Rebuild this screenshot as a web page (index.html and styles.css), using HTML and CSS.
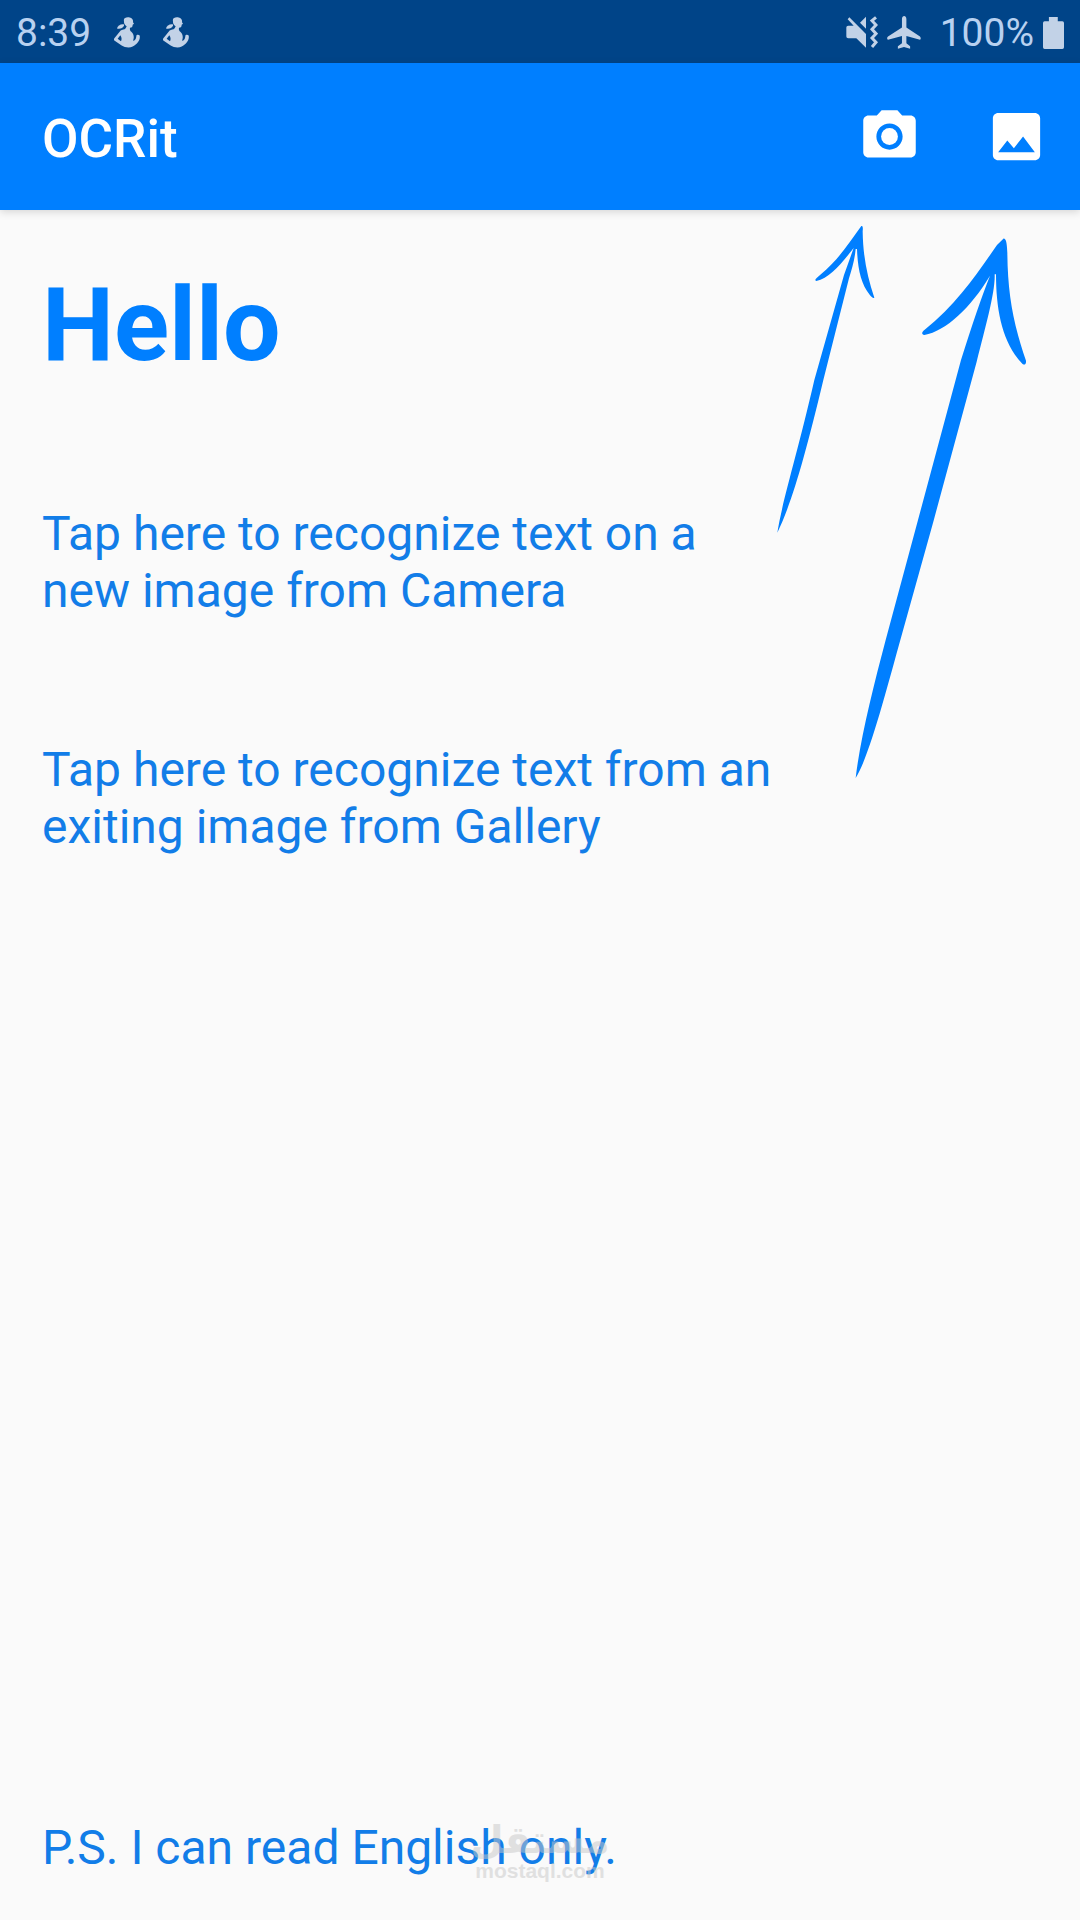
FILE: index.html
```html
<!DOCTYPE html>
<html lang="en">
<head>
  <meta charset="UTF-8" />
  <meta name="viewport" content="width=device-width, initial-scale=1.0"/>
  <title>OCRit</title>
  <link rel="stylesheet" href="styles.css">
</head>
<body>

  <div class="status-bar">
    <div class="status-left">
      <span class="clock">8:39</span>
      <svg class="icon-notice" viewBox="342 50 78 92"><path d="M372 62C369 52 380 49 389 51C397 53 400 58 399 65L402 70L398 73C398 79 396 82 390 82C389 88 390 91 394 94C402 101 403 112 399 121C405 121 408 115 409 108C408 103 415 101 419 105C422 119 411 132 398 138C389 143 374 141 365 135L343 120C341 117 342 114 345 111L362 90C366 86 374 88 377 83L380 77C375 74 371 69 372 62ZM361 104L353 115L363 122C366 116 365 110 361 104Z" fill-rule="evenodd"/><path d="M372 72C362 70 353 76 351 84C359 87 369 83 372 76Z"/></svg>
      <svg class="icon-notice" viewBox="342 50 78 92"><path d="M372 62C369 52 380 49 389 51C397 53 400 58 399 65L402 70L398 73C398 79 396 82 390 82C389 88 390 91 394 94C402 101 403 112 399 121C405 121 408 115 409 108C408 103 415 101 419 105C422 119 411 132 398 138C389 143 374 141 365 135L343 120C341 117 342 114 345 111L362 90C366 86 374 88 377 83L380 77C375 74 371 69 372 62ZM361 104L353 115L363 122C366 116 365 110 361 104Z" fill-rule="evenodd"/><path d="M372 72C362 70 353 76 351 84C359 87 369 83 372 76Z"/></svg>
    </div>
    <div class="status-right">
      <svg class="icon-mute" viewBox="75 44 96 99"><path d="M85 48L135 98V139L106 111H82C78 111 76 109 76 105V79C76 75 78 73 82 73H98L80 54Z"/><path d="M117 64L135 46V82Z"/><path d="M165 48L153 58L165 71L153 84L165 97L153 110L165 123L153 137" class="wave"/></svg>
      <svg class="icon-plane" viewBox="208 44 100 97"><path d="M252 53C252 41 265 41 265 53V78L305 104C308 107 308 113 305 114L265 103V124L276 133V140L258 135L240 140V133L252 124V103L211 114C207 112 208 106 211 104L252 78Z"/></svg>
      <span class="percent">100%</span>
      <svg class="icon-battery" viewBox="669 46 64 97"><path d="M687 46H714V59H728Q733 59 733 64V138Q733 143 728 143H674Q669 143 669 138V64Q669 59 674 59H687Z"/></svg>
    </div>
  </div>

  <header class="app-bar">
    <h1 class="app-title">OCRit</h1>
    <div class="actions">
      <button class="action" aria-label="Camera">
        <svg viewBox="0 0 24 24"><circle cx="12" cy="12" r="3.2"/><path d="M9 2L7.17 4H4c-1.1 0-2 .9-2 2v12c0 1.1.9 2 2 2h16c1.1 0 2-.9 2-2V6c0-1.1-.9-2-2-2h-3.17L15 2H9zm3 15c-2.76 0-5-2.24-5-5s2.24-5 5-5 5 2.24 5 5-2.24 5-5 5z"/></svg>
      </button>
      <button class="action" aria-label="Gallery">
        <svg viewBox="0 0 24 24"><path d="M21 19V5c0-1.1-.9-2-2-2H5c-1.1 0-2 .9-2 2v14c0 1.1.9 2 2 2h14c1.1 0 2-.9 2-2zM8.5 13.5l2.5 3.01L14.5 12l4.5 6H5l3.5-4.5z"/></svg>
      </button>
    </div>
  </header>

  <main class="content">
    <h2 class="hello">Hello</h2>
    <button class="hint">Tap here to recognize text on a new image from Camera</button>
    <button class="hint">Tap here to recognize text from an exiting image from Gallery</button>
    <p class="note">P.S. I can read English only.</p>

    <!-- arrows from the hints up to the toolbar icons -->
    <svg class="arrows" viewBox="0 0 960 1740">
      <path d="M304 48C309 46 309 55 308 64C309 140 322 200 343 263C340 266 334 260 329 254C303 222 293 176 291 117L287 117C284 150 276 175 267 205L190 510C135 740 95 880 52 968C70 860 110 740 163 510L252 195L281 114C242 164 208 205 169 213C160 210 172 203 181 194C236 148 257 112 304 48Z"/>
      <path d="M730 86C740 82 741 110 742 128C743 255 761 345 798 452C799 466 791 466 785 459C726 397 708 298 708 193L704 193C706 245 678 345 650 455L520 935L421 1290C382 1430 328 1640 287 1704C300 1590 340 1430 377 1290L474 930L603 450Q653 290 690 197C633 292 558 363 493 375C482 373 487 364 494 359C590 282 648 196 711 105Q722 94 730 86Z"/>
    </svg>

    <div class="watermark">
      <span class="watermark-name" lang="ar" dir="rtl">مستقل</span>
      <span class="watermark-site">mostaql.com</span>
    </div>
  </main>

</body>
</html>
```
FILE: styles.css
```css
* {
  box-sizing: border-box;
}

body {
  margin: 0;
  min-height: 100vh;
  display: flex;
  flex-direction: column;
  font-family: Roboto, sans-serif;
  background-color: #fafafa;
}

button {
  padding: 0;
  border: none;
  background: none;
  font: inherit;
  cursor: pointer;
}

svg {
  display: block;
}

.status-bar {
  display: flex;
  justify-content: space-between;
  align-items: center;
  height: 63px;
  padding: 2px 16px 0;
  background-color: #004488;
  color: #b8d1f0;
  fill: #c2d2e7;
  font-size: 39px;
}

.status-left,
.status-right {
  display: flex;
  align-items: center;
}

.status-left {
  gap: 23px;
}

.status-right {
  gap: 9px;
}

.icon-notice {
  width: 26px;
  height: 31px;
}

.icon-mute {
  width: 32px;
  height: 33px;
}

.wave {
  fill: none;
  stroke: #c2d2e7;
  stroke-width: 9;
}

.icon-plane {
  width: 34px;
  height: 33px;
}

.percent {
  margin-left: 10px;
}

.icon-battery {
  width: 21px;
  height: 32px;
}

.app-bar {
  display: flex;
  justify-content: space-between;
  align-items: center;
  height: 147px;
  padding: 0 32px 0 42px;
  background-color: #007fff;
  box-shadow: 0 2px 8px rgba(0, 0, 0, 0.15);
}

.app-title {
  margin: 0;
  padding-top: 4px;
  color: #fff;
  font-size: 53px;
  font-weight: 500;
}

.actions {
  display: flex;
  gap: 64px;
}

.action svg {
  width: 63px;
  height: 63px;
  fill: #fff;
}

.content {
  position: relative;
  flex: 1;
  display: flex;
  flex-direction: column;
  align-items: flex-start;
  gap: 122px;
  padding: 57px 300px 44px 42px;
  color: #127de8;
  font-size: 48px;
  line-height: 57px;
}

.hello {
  margin: 0;
  color: #007fff;
  font-size: 102px;
  font-weight: 700;
  line-height: 116px;
}

.hint {
  color: inherit;
  text-align: left;
}

.note {
  margin: auto 0 0;
}

.arrows {
  position: absolute;
  top: 0;
  right: 0;
  width: 320px;
  height: 580px;
  fill: #007fff;
  pointer-events: none;
}

.watermark {
  position: absolute;
  left: 0;
  right: 0;
  bottom: 38px;
  display: flex;
  flex-direction: column;
  align-items: center;
  color: #c8c8c8;
  opacity: 0.5;
  font-weight: 700;
  pointer-events: none;
}

.watermark-name {
  font-family: "DejaVu Sans", sans-serif;
  font-size: 38px;
  line-height: 40px;
}

.watermark-site {
  font-family: "Liberation Sans", sans-serif;
  font-size: 21px;
  line-height: 22px;
}
```
